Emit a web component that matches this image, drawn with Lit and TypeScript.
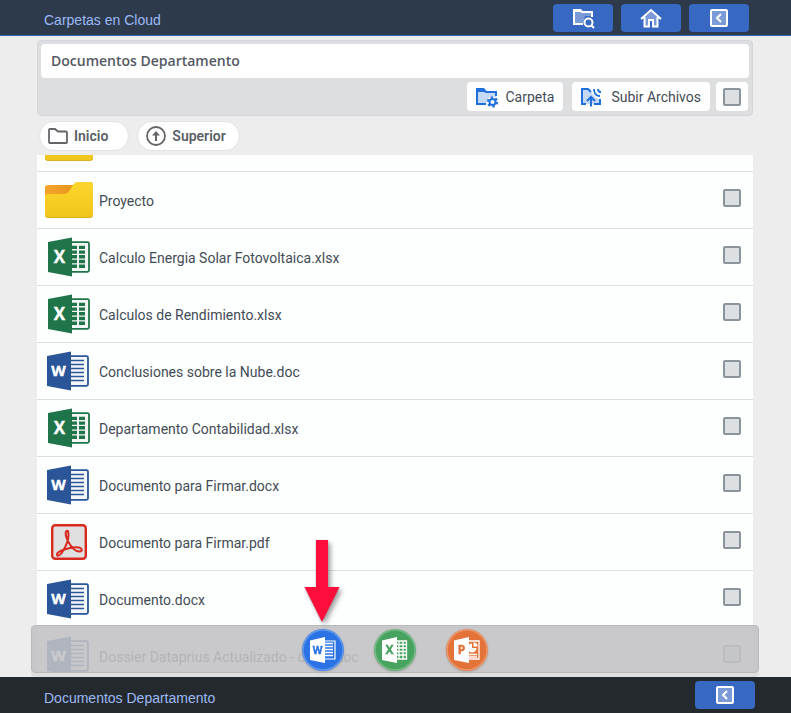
import { LitElement, html, css, svg } from "lit";
import { customElement, property, query } from "lit/decorators.js";

type Kind = "folder" | "excel" | "word" | "pdf";

interface Entry {
  name: string;
  kind: Kind;
}

const entries: Entry[] = [
  { name: "", kind: "folder" },
  { name: "Proyecto", kind: "folder" },
  { name: "Calculo Energia Solar Fotovoltaica.xlsx", kind: "excel" },
  { name: "Calculos de Rendimiento.xlsx", kind: "excel" },
  { name: "Conclusiones sobre la Nube.doc", kind: "word" },
  { name: "Departamento Contabilidad.xlsx", kind: "excel" },
  { name: "Documento para Firmar.docx", kind: "word" },
  { name: "Documento para Firmar.pdf", kind: "pdf" },
  { name: "Documento.docx", kind: "word" },
  { name: "Dossier Dataprius Actualizado - copia.doc", kind: "word" },
];

const letter = (ch: string, x: number, y: number, size: number, fill: string) => svg`
  <text x=${x} y=${y} font-size=${size} fill=${fill} stroke=${fill} stroke-width="0.4" font-weight="700" text-anchor="middle"
    font-family="Open Sans, Noto Sans, sans-serif">${ch}</text>`;

const folderIcon = html`<svg width="48" height="38" viewBox="0 0 48 38" aria-hidden="true">
  <defs>
    <linearGradient id="front" x1="0" y1="0" x2="0" y2="1">
      <stop offset="0" stop-color="#fdd52c" /><stop offset="1" stop-color="#f1c61c" />
    </linearGradient>
    <linearGradient id="back" x1="0" y1="0" x2="1" y2="0">
      <stop offset="0" stop-color="#f5a42a" /><stop offset="1" stop-color="#e8951f" />
    </linearGradient>
  </defs>
  <path d="M0 7a3 3 0 0 1 3-3h25v14H0z" fill="url(#back)" />
  <path d="M0 16a3 3 0 0 1 3-3h15c3 0 5-1 7-4l3-5c2-2 3-3 6-3h11a3 3 0 0 1 3 3v30a3 3 0 0 1-3 3H3a3 3 0 0 1-3-3z" fill="#d9b01f" />
  <path d="M0 16a3 3 0 0 1 3-3h15c3 0 5-1 7-4l3-5c2-2 3-3 6-3h11a3 3 0 0 1 3 3v29a3 3 0 0 1-3 3H3a3 3 0 0 1-3-3z" fill="url(#front)" />
</svg>`;

const excelIcon = html`<svg width="48" height="40" viewBox="0 0 48 40" aria-hidden="true">
  <rect x="20" y="5.200" width="24" height="29.600" rx="1.500" fill="#f4f8f5" stroke="#20744a" stroke-width="1.800" />
  <path d="M25 8.700h7v3.400h-7zM34 8.700h6v3.400h-6zM25 13.400h7v3.400h-7zM34 13.400h6v3.400h-6zM25 18.100h7v3.400h-7zM34 18.100h6v3.400h-6zM25 22.800h7v3.400h-7zM34 22.800h6v3.400h-6zM25 27.500h7v3.400h-7zM34 27.500h6v3.400h-6z" fill="#20744a" />
  <path d="M3 5 27 .500V39.500L3 35z" fill="#20744a" />
  ${letter("X", 14.5, 26, 17, "#fff")}
</svg>`;

const wordIcon = html`<svg width="48" height="40" viewBox="0 0 48 40" aria-hidden="true">
  <rect x="19" y="5.200" width="24" height="29.600" rx="1.500" fill="#f4f6fa" stroke="#2a5699" stroke-width="1.800" />
  <path d="M26 9.500h13M26 13.500h13M26 17.500h13M26 21.500h13M26 25.500h13M26 29.500h13" stroke="#2a5699" stroke-width="1.600" />
  <path d="M2 5 26 .500V39.500L2 35z" fill="#2a5699" />
  ${letter("W", 13.5, 25, 15, "#fff")}
</svg>`;

const pdfIcon = html`<svg width="48" height="40" viewBox="0 0 48 40" aria-hidden="true">
  <rect x="7.200" y="3.200" width="33.600" height="33.600" rx="3" fill="#e0e0e0" stroke="#d92a20" stroke-width="2.400" />
  <path d="M21.500 9c-2 2 0 8 2.500 12 3 5 7 9 11 8.500 2.500-.500 2.500-3-1-4-5-1-11 .500-16 2.500-4 1.500-6.500 3.500-6 5 1 2 4-.500 6-4 3-5 5.500-11 5.500-16 0-4-1-5-2-4z" fill="none" stroke="#d92a20" stroke-width="2" stroke-linejoin="round" />
</svg>`;

const icons: Record<Kind, unknown> = {
  folder: folderIcon,
  excel: excelIcon,
  word: wordIcon,
  pdf: pdfIcon,
};

const backIcon = html`<svg width="20" height="20" viewBox="0 0 20 20" aria-hidden="true">
  <rect x="2" y="2" width="16" height="16" rx="1" fill="#7a9ad8" stroke="#fff" stroke-width="2" />
  <path d="M12 6 8 10l4 4" fill="none" stroke="#fff" stroke-width="2" />
</svg>`;

const searchFolderIcon = html`<svg width="24" height="22" viewBox="0 0 24 22" aria-hidden="true">
  <path d="M3 4v13h9l2-8h7V6H11L9 4z" fill="#7a9ad8" />
  <path d="M12 17H3V3h6l2 2h10v5" fill="none" stroke="#fff" stroke-width="2" />
  <path d="M2 2h8l2 3H2z" fill="#fff" />
  <circle cx="17.500" cy="15.500" r="4" fill="#3769c2" stroke="#fff" stroke-width="2" />
  <path d="m20.500 18.500 2.500 2.500" stroke="#fff" stroke-width="2" />
</svg>`;

const homeIcon = html`<svg width="22" height="20" viewBox="0 0 22 20" aria-hidden="true">
  <path d="M4 9.500 11 3l7 6.500V18h-5v-6H9v6H4z" fill="#7a9ad8" />
  <path d="M1 11 11 2l10 9M4.500 9v9.500H9V12h4v6.500h4.500V9" fill="none" stroke="#fff" stroke-width="2" />
</svg>`;

const gearFolderIcon = html`<svg width="24" height="22" viewBox="0 0 24 22" aria-hidden="true">
  <path d="M2 5v13h9l3-7h7V6H11z" fill="#c5d8f6" />
  <path d="M11 18H2V3h6l3 3h10v4" fill="none" stroke="#1f6fdc" stroke-width="2" />
  <path d="M1 2h8l3 4H1z" fill="#1f6fdc" />
  <circle cx="17.500" cy="16" r="4.600" fill="none" stroke="#1f6fdc" stroke-width="2" stroke-dasharray="2.400 2.417" />
  <circle cx="17.500" cy="16" r="3" fill="#fff" stroke="#1f6fdc" stroke-width="2" />
</svg>`;

const uploadIcon = html`<svg width="22" height="20" viewBox="0 0 22 20" aria-hidden="true">
  <path d="M2 2h6l3 3 4 5 5 3v4H2z" fill="#c5d8f6" />
  <path d="M6 17H2V2h6l3 3" fill="none" stroke="#1f6fdc" stroke-width="2" />
  <path d="M14 17h6v-5M11 19.500v-9M7 14l4-4 4 4" fill="none" stroke="#1f6fdc" stroke-width="2" />
  <path d="M14 2c0 4 2 7 6 7M18 2c0 2 1 3 3 3" fill="none" stroke="#1f6fdc" stroke-width="1.800" />
</svg>`;

const outlineFolderIcon = html`<svg width="20" height="16" viewBox="0 0 20 16" aria-hidden="true">
  <path d="M2 1h5l3 2.500h8a1 1 0 0 1 1 1V14a1 1 0 0 1-1 1H2a1 1 0 0 1-1-1V2a1 1 0 0 1 1-1z" fill="none" stroke="#636569" stroke-width="1.800" />
</svg>`;

const upIcon = html`<svg width="20" height="20" viewBox="0 0 20 20" aria-hidden="true">
  <circle cx="10" cy="10" r="9" fill="none" stroke="#636569" stroke-width="1.800" />
  <path d="M10 15V7" stroke="#636569" stroke-width="2" /><path d="M6 9.500 10 5l4 4.500z" fill="#636569" />
</svg>`;

const badge = (ch: string, size: number, colour: string, lines: unknown) => html`<svg width="42" height="42" viewBox="0 0 42 42" aria-hidden="true">
  <circle cx="21" cy="21" r="21" fill=${colour} />
  <circle cx="21" cy="21" r="20" fill="none" stroke="#fff" stroke-opacity=".250" stroke-width="1.500" />
  ${lines}
  <path d="m8 11.500 15-3.500v26L8 31z" fill="#fff" />
  ${letter(ch, 15.5, 25, size, colour)}
</svg>`;

const wordBadge = badge("W", 10, "#2b73e4", svg`
  <path d="M22 12h11v18H22" fill="none" stroke="#fff" stroke-width="1.200" />
  <path d="M22 14.500h9M22 17.500h9M22 20.500h9M22 23.500h9M22 26.500h9" stroke="#fff" stroke-width="1.400" />`);
const excelBadge = badge("X", 12, "#47a35f", svg`
  <path d="M22 12h10.500v18H22M22 15.500h10M22 19h10M22 22.500h10M22 26h10M25 12v18M29 12v18" fill="none" stroke="#fff" stroke-width="1.300" />`);
const pointBadge = badge("P", 12, "#e4733a", svg`
  <path d="M22 12h11v18H22M22 25.500h9M22 28h9" fill="none" stroke="#fff" stroke-width="1.300" />
  <path d="M26 14.500a4.500 4.500 0 1 0 4.500 4.500h-4.500z" fill="#fff" />
  <path d="M27.500 17.500v-4a4 4 0 0 1 4 4z" fill="#fff" />`);

const shared = css`
  * {
    box-sizing: border-box;
  }
  svg {
    display: block;
    flex: none;
  }
  button {
    display: flex;
    align-items: center;
    border: 0;
    margin: 0;
    font: inherit;
    color: inherit;
    cursor: pointer;
  }
  .tick {
    appearance: none;
    flex: none;
    width: 18px;
    height: 18px;
    margin: 0;
    border: 2px solid #8c949b;
    border-radius: 2px;
    background: #dde0e3;
  }
  .tick:checked {
    background: #3769c2;
  }
`;

@customElement("title-bar")
class TitleBar extends LitElement {
  @property() text = "";
  static styles = [
    shared,
    css`
      :host {
        display: flex;
        flex: none;
        align-items: center;
        height: 36px;
        padding-left: 44px;
        font: 14px "Liberation Sans", Arial, sans-serif;
        color: #9db9f3;
      }
      .text {
        flex: 1;
        padding-top: 5px;
      }
      .actions {
        display: flex;
        gap: 8px;
      }
    `,
  ];
  render() {
    return html`<span class="text">${this.text}</span>
      <div class="actions"><slot></slot></div>`;
  }
}

@customElement("file-row")
class FileRow extends LitElement {
  @property({ attribute: false }) entry!: Entry;
  static styles = [
    shared,
    css`
      :host {
        display: block;
      }
      .row {
        display: flex;
        align-items: center;
        height: 57px;
        padding: 0 12px 0 8px;
        border-bottom: 1px solid #dcdddf;
        background: #fdfefe;
      }
      .name {
        flex: 1;
        padding: 2px 0 0 6px;
      }
      .tick {
        margin-bottom: 4px;
      }
    `,
  ];
  render() {
    return html`<div class="row">
      ${icons[this.entry.kind]}
      <label class="name" for="pick">${this.entry.name}</label>
      <input class="tick" id="pick" type="checkbox" />
    </div>`;
  }
}

@customElement("app-root")
class AppRoot extends LitElement {
  @query(".list") list!: HTMLElement;

  static styles = [
    shared,
    css`
      :host {
        display: flex;
        flex-direction: column;
        height: 100vh;
        background: #ededed;
        color: #434c55;
        font: 14px/20px Roboto, "Noto Sans", sans-serif;
      }
      .top {
        padding-right: 42px;
        background: #2d3a4c;
        border-bottom: 1px solid #2f66b3;
      }
      .bottom {
        padding-right: 36px;
        background: #24292d;
      }
      .blue {
        justify-content: center;
        width: 60px;
        height: 28px;
        padding: 0;
        border-radius: 4px;
        background: #3769c2;
      }
      .main {
        position: relative;
        flex: 1;
        min-height: 0;
        display: flex;
        flex-direction: column;
        padding: 4px 38px 0 37px;
      }
      .panel {
        padding: 3px;
        border: 1px solid #d3d7dc;
        border-radius: 4px;
        background: #dcdee0;
      }
      .heading {
        margin: 0;
        padding: 7px 10px;
        border-radius: 4px;
        background: #fff;
        font: 600 14px/20px "Open Sans", "Noto Sans", sans-serif;
        color: #545963;
      }
      .tools {
        display: flex;
        justify-content: flex-end;
        align-items: center;
        padding: 4px 0 1px;
      }
      .tool {
        height: 29px;
        padding: 0 9px 0 8px;
        border-radius: 4px;
        background: #fff;
        gap: 6px;
      }
      .wide {
        margin: 0 6px 0 9px;
        gap: 9px;
      }
      .all {
        display: flex;
        padding: 0 7px;
        height: 29px;
        margin-right: 1px;
        align-items: center;
        border-radius: 4px;
        background: #fff;
      }
      .crumbs {
        display: flex;
        gap: 8px;
        padding: 5px 2px 4px;
      }
      .pill {
        height: 30px;
        padding: 0 13px 0 8px;
        gap: 6px;
        border: 1px solid #e3e3e4;
        border-radius: 15px;
        background: #fff;
        font-weight: 600;
        color: #5b5f66;
      }
      .home {
        padding-right: 20px;
      }
      .list {
        flex: 1;
        min-height: 0;
        overflow-y: auto;
        scrollbar-width: none;
        list-style: none;
        margin: 0;
        padding: 0;
      }
      .dock {
        position: absolute;
        left: 31px;
        right: 32px;
        bottom: 4px;
        height: 48px;
        padding-top: 2px;
        display: flex;
        justify-content: center;
        align-items: center;
        gap: 30px;
        border: 1px solid #b9babc;
        border-radius: 4px;
        background: rgb(193 194 196 / 88%);
        box-shadow: 0 4px 0 #dedede;
      }
      .round {
        position: relative;
        padding: 0;
        border-radius: 21px;
        background: none;
        filter: drop-shadow(0 1px 1px #8888);
      }
      .arrow {
        position: absolute;
        left: 2px;
        bottom: 49px;
        pointer-events: none;
        filter: drop-shadow(3px 3px 2px #0004);
      }
    `,
  ];

  async firstUpdated() {
    await Promise.all(Array.from(this.renderRoot.querySelectorAll("file-row"), (r) => (r as FileRow).updateComplete));
    this.list.scrollTop = 40;
  }

  render() {
    return html`
      <title-bar class="top" text="Carpetas en Cloud">
        <button class="blue" aria-label="Buscar">${searchFolderIcon}</button>
        <button class="blue" aria-label="Inicio">${homeIcon}</button>
        <button class="blue" aria-label="Volver">${backIcon}</button>
      </title-bar>
      <div class="main">
        <div class="panel">
          <h1 class="heading">Documentos Departamento</h1>
          <div class="tools">
            <button class="tool">${gearFolderIcon}Carpeta</button>
            <button class="tool wide">${uploadIcon}Subir Archivos</button>
            <label class="all"><input class="tick" type="checkbox" aria-label="Seleccionar todo" /></label>
          </div>
        </div>
        <nav class="crumbs">
          <button class="pill home">${outlineFolderIcon}Inicio</button>
          <button class="pill">${upIcon}Superior</button>
        </nav>
        <ul class="list">
          ${entries.map((e) => html`<li><file-row .entry=${e}></file-row></li>`)}
        </ul>
        <div class="dock">
          <button class="round" aria-label="Word">
            ${wordBadge}
            <svg class="arrow" width="36" height="82" viewBox="0 0 36 82" aria-hidden="true">
              <path d="M12 0h12v47h11.500L18 82 .500 47H12z" fill="#fd0d3c" />
            </svg>
          </button>
          <button class="round" aria-label="Excel">${excelBadge}</button>
          <button class="round" aria-label="PowerPoint">${pointBadge}</button>
        </div>
      </div>
      <title-bar class="bottom" text="Documentos Departamento">
        <button class="blue" aria-label="Volver">${backIcon}</button>
      </title-bar>
    `;
  }
}
